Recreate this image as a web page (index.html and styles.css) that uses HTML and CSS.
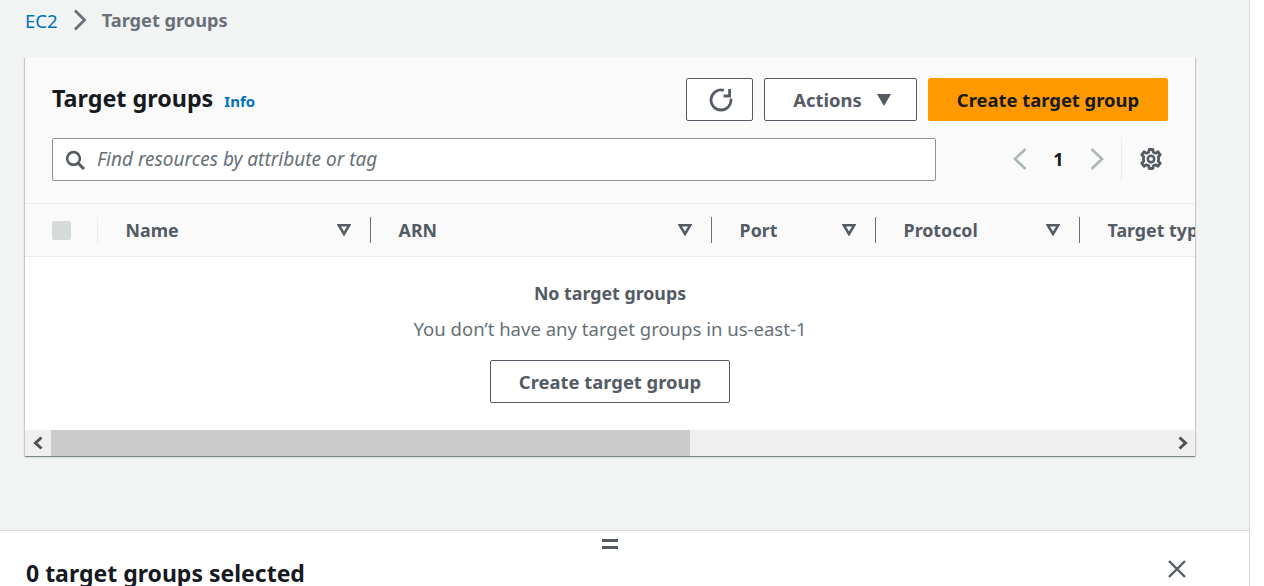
FILE: index.html
```html
<!DOCTYPE html>
<html lang="en">
<head>
    <meta charset="UTF-8">
    <title>Target groups | EC2</title>
    <link rel="stylesheet" href="styles.css">
</head>
<body>
    <div class="page">
        <div class="main">
            <nav class="breadcrumb">
                <a class="crumb-link">EC2</a>
                <svg class="crumb-sep" width="14" height="22" viewBox="0 0 14 22"><path d="M2 1.5 L11.5 11 L2 20.5" fill="none" stroke="#687078" stroke-width="2.8"/></svg>
                <span class="crumb-current">Target groups</span>
            </nav>

            <section class="card">
                <div class="card-head">
                    <div class="title-row">
                        <h1 class="title">Target groups</h1>
                        <a class="info">Info</a>
                        <div class="actions">
                            <button class="btn btn-refresh">
                                <svg width="24" height="24" viewBox="0 0 24 24"><path d="M21.9 10.6 A10 10 0 1 1 14.8 2.4" fill="none" stroke="#545b64" stroke-width="2.8"/><path d="M20.6 1 V8 H14.6" fill="none" stroke="#545b64" stroke-width="2.8"/></svg>
                            </button>
                            <button class="btn btn-actions">Actions
                                <svg width="14" height="12" viewBox="0 0 14 12"><path d="M0 0 H14 L7 12 Z" fill="#545b64"/></svg>
                            </button>
                            <button class="btn btn-primary">Create target group</button>
                        </div>
                    </div>
                    <div class="filter-row">
                        <div class="search">
                            <svg width="20" height="20" viewBox="0 0 20 20"><circle cx="8.5" cy="8.5" r="6.4" fill="none" stroke="#545b64" stroke-width="2.6"/><path d="M13 13 L19 19" stroke="#545b64" stroke-width="3"/></svg>
                            <span class="search-text">Find resources by attribute or tag</span>
                        </div>
                        <div class="pager">
                            <svg width="14" height="22" viewBox="0 0 14 22"><path d="M12.5 1 L2 11 L12.5 21" fill="none" stroke="#aab7b8" stroke-width="2.6"/></svg>
                            <span class="page-num">1</span>
                            <svg width="14" height="22" viewBox="0 0 14 22"><path d="M1.5 1 L12 11 L1.5 21" fill="none" stroke="#aab7b8" stroke-width="2.6"/></svg>
                        </div>
                        <div class="settings">
                            <svg width="22" height="22" viewBox="0 0 22 22"><path d="M9.2 1.5 H12.8 L13.4 4.2 L15.6 5.2 L18 3.8 L20.2 6.8 L18.3 8.7 L18.6 11 L18.3 13.3 L20.2 15.2 L18 18.2 L15.6 16.8 L13.4 17.8 L12.8 20.5 H9.2 L8.6 17.8 L6.4 16.8 L4 18.2 L1.8 15.2 L3.7 13.3 L3.4 11 L3.7 8.7 L1.8 6.8 L4 3.8 L6.4 5.2 L8.6 4.2 Z" fill="none" stroke="#545b64" stroke-width="2.8" stroke-linejoin="round"/><circle cx="11" cy="11" r="3.2" fill="none" stroke="#545b64" stroke-width="2.5"/></svg>
                        </div>
                    </div>
                </div>

                <div class="table-head">
                    <div class="col col-check"><span class="checkbox"></span></div>
                    <div class="col col-name"><span>Name</span><svg class="sort" width="14" height="12" viewBox="0 0 14 12"><path d="M1.8 1.3 H12.2 L7 10 Z" fill="none" stroke="#545b64" stroke-width="2.6"/></svg></div>
                    <div class="col col-arn"><span>ARN</span><svg class="sort" width="14" height="12" viewBox="0 0 14 12"><path d="M1.8 1.3 H12.2 L7 10 Z" fill="none" stroke="#545b64" stroke-width="2.6"/></svg></div>
                    <div class="col col-port"><span>Port</span><svg class="sort" width="14" height="12" viewBox="0 0 14 12"><path d="M1.8 1.3 H12.2 L7 10 Z" fill="none" stroke="#545b64" stroke-width="2.6"/></svg></div>
                    <div class="col col-protocol"><span>Protocol</span><svg class="sort" width="14" height="12" viewBox="0 0 14 12"><path d="M1.8 1.3 H12.2 L7 10 Z" fill="none" stroke="#545b64" stroke-width="2.6"/></svg></div>
                    <div class="col col-type"><span>Target type</span></div>
                </div>

                <div class="empty">
                    <strong class="empty-title">No target groups</strong>
                    <p class="empty-text">You don’t have any target groups in us-east-1</p>
                    <button class="btn btn-empty">Create target group</button>
                </div>

                <div class="scrollbar">
                    <span class="scroll-arrow"><svg width="12" height="14" viewBox="0 0 12 14"><path d="M9.5 1.5 L3.5 7 L9.5 12.5" fill="none" stroke="#505050" stroke-width="3"/></svg></span>
                    <span class="scroll-thumb"></span>
                    <span class="scroll-track"></span>
                    <span class="scroll-arrow scroll-arrow-right"><svg width="12" height="14" viewBox="0 0 12 14"><path d="M2.5 1.5 L8.5 7 L2.5 12.5" fill="none" stroke="#505050" stroke-width="3"/></svg></span>
                </div>
            </section>
        </div>

        <div class="split-panel">
            <div class="drag-handle"></div>
            <div class="split-head">
                <h2 class="split-title">0 target groups selected</h2>
                <svg width="20" height="20" viewBox="0 0 20 20"><path d="M2 2 L18 18 M18 2 L2 18" stroke="#545b64" stroke-width="2.4"/></svg>
            </div>
        </div>
    </div>
</body>
</html>
```

FILE: styles.css
```css
html, body {
    margin: 0;
    height: 100%;
    overflow: hidden;
    background-color: #fff;
}

body {
    font-family: "Noto Sans", "Open Sans", sans-serif;
    color: #545b64;
}

h1, h2, p {
    margin: 0;
}

.page {
    width: 1250px;
    height: 586px;
    box-sizing: border-box;
    display: flex;
    flex-direction: column;
    border-right: 1px solid #d5dbdb;
    overflow: hidden;
}

.main {
    height: 531px;
    flex: none;
    box-sizing: border-box;
    background-color: #f2f3f3;
    border-bottom: 1px solid #d5dbdb;
    padding: 0 54px 0 25px;
}

/* breadcrumb */
.breadcrumb {
    height: 40px;
    margin-bottom: 17px;
    display: flex;
    align-items: center;
    font-size: 18.2px;
}

.crumb-link {
    color: #0073bb;
    font-size: 18.6px;
}

.crumb-sep {
    margin: 0 15px 0 15px;
}

.crumb-current {
    color: #687078;
    font-weight: 700;
}

/* card */
.card {
    width: 1170px;
    height: 399px;
    background-color: #fff;
    box-shadow: 0 1px 1px 0 rgba(0, 28, 36, 0.3), 1px 1px 1px 0 rgba(0, 28, 36, 0.15), -1px 1px 1px 0 rgba(0, 28, 36, 0.15);
    display: flex;
    flex-direction: column;
    overflow: hidden;
}

.card-head {
    height: 147px;
    box-sizing: border-box;
    padding: 21px 27px 0;
    background-color: #fafafa;
    border-bottom: 1px solid #eaeded;
}

.title-row {
    display: flex;
    align-items: center;
    height: 43px;
}

.title {
    font-size: 23.3px;
    font-weight: 700;
    color: #16191f;
    margin-bottom: 4px;
}

.info {
    margin-left: 11px;
    margin-top: 2px;
    font-size: 15px;
    font-weight: 700;
    color: #0073bb;
}

.actions {
    margin-left: auto;
    display: flex;
    gap: 11px;
}

.btn {
    box-sizing: border-box;
    height: 43px;
    border: 1px solid #545b64;
    border-radius: 2px;
    background-color: #fff;
    color: #545b64;
    font-family: inherit;
    font-size: 18.4px;
    font-weight: 700;
    display: flex;
    align-items: center;
    justify-content: center;
    padding: 0;
}

.btn-refresh {
    width: 67px;
    padding-left: 2px;
}

.btn-actions {
    width: 153px;
    gap: 15px;
    padding-left: 3px;
}

.btn-primary {
    width: 240px;
    background-color: #ff9900;
    border-color: #ff9900;
    color: #16191f;
}

.filter-row {
    display: flex;
    align-items: center;
    height: 43px;
    margin-top: 17px;
}

.search {
    box-sizing: border-box;
    width: 884px;
    height: 43px;
    background-color: #fff;
    border: 1px solid #879596;
    border-radius: 2px;
    display: flex;
    align-items: center;
    gap: 12px;
    padding-left: 12px;
}

.search-text {
    font-size: 19px;
    font-style: italic;
    color: #687078;
    margin-bottom: 2px;
}

.pager {
    margin-left: 77px;
    width: 91px;
    margin-bottom: 2px;
    display: flex;
    align-items: center;
    justify-content: space-between;
}

.page-num {
    font-size: 18px;
    font-weight: 700;
    color: #16191f;
}

.settings {
    margin-left: 17px;
    height: 43px;
    padding-left: 18px;
    border-left: 1px solid #eaeded;
    display: flex;
    align-items: center;
}

.settings svg {
    margin-bottom: 2px;
}

/* table header */
.table-head {
    height: 53px;
    flex: none;
    box-sizing: border-box;
    background-color: #fafafa;
    border-bottom: 1px solid #eaeded;
    display: flex;
    align-items: center;
    font-size: 17.8px;
    font-weight: 700;
    white-space: nowrap;
}

.col {
    flex: none;
    box-sizing: border-box;
    height: 26px;
    padding-left: 27.6px;
    padding-right: 19px;
    border-right: 1px solid #687078;
    display: flex;
    align-items: center;
    justify-content: space-between;
}

.col-check {
    width: 73px;
    padding-left: 27px;
    border-right-color: #eaeded;
}

.col-name {
    width: 273px;
}

.col-arn {
    width: 341px;
}

.col-port {
    width: 164px;
}

.col-protocol {
    width: 204px;
}

.col-type {
    border-right: 0;
}

.checkbox {
    width: 19px;
    height: 19px;
    border-radius: 2px;
    background-color: #d5dbdb;
}

/* empty state */
.empty {
    flex: 1;
    background-color: #fff;
    display: flex;
    flex-direction: column;
    align-items: center;
    padding-top: 23px;
}

.empty-title {
    font-size: 17.8px;
    line-height: 26px;
}

.empty-text {
    margin-top: 10px;
    font-size: 18.55px;
    line-height: 26px;
    color: #687078;
}

.btn-empty {
    width: 240px;
    margin-top: 18px;
}

/* scrollbar */
.scrollbar {
    height: 26px;
    flex: none;
    display: flex;
    background-color: #efefef;
}

.scroll-arrow {
    width: 26px;
    display: flex;
    align-items: center;
    justify-content: center;
}

.scroll-arrow-right svg {
    margin-left: 2px;
}

.scroll-thumb {
    width: 639px;
    background-color: #cbcbcb;
}

.scroll-track {
    flex: 1;
}

/* split panel */
.split-panel {
    flex: 1;
    background-color: #fff;
    position: relative;
}

.drag-handle {
    position: absolute;
    left: 602px;
    top: 8px;
    width: 16px;
    height: 10px;
    box-sizing: border-box;
    border-top: 3px solid #545b64;
    border-bottom: 3px solid #545b64;
}

.split-head {
    display: flex;
    justify-content: space-between;
    padding: 27px 62px 0 26px;
}

.split-head svg {
    margin-top: 1px;
}

.split-title {
    font-size: 23px;
    font-weight: 700;
    color: #16191f;
    line-height: 30px;
}
```
